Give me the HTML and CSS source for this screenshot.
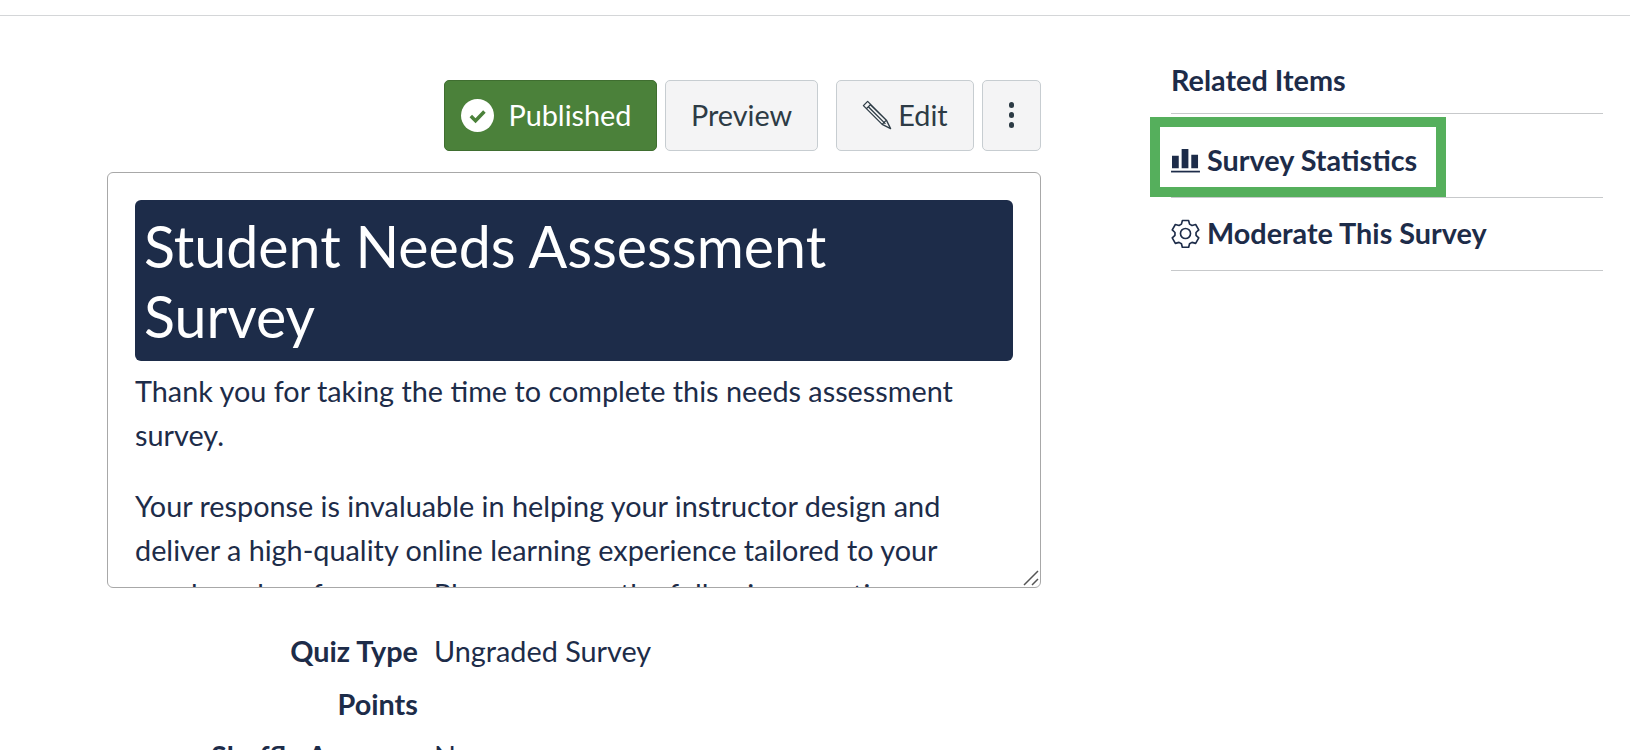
FILE: index.html
```html
<!DOCTYPE html>
<html lang="en">
<head>
<meta charset="utf-8">
<title>Student Needs Assessment Survey</title>
<link rel="stylesheet" href="styles.css">
</head>
<body>
<div class="topbar"></div>
<div class="page">
  <main class="content">
    <div class="toolbar">
      <button class="btn btn-published">
        <svg class="check" viewBox="0 0 32 32" width="33" height="33"><circle cx="16" cy="16" r="16" fill="#fff"/><path d="M9.500 16.500l4.600 4.600 8.600-9" fill="none" stroke="#4b813a" stroke-width="3.400"/></svg>
        <span>Published</span>
      </button>
      <button class="btn btn-preview">Preview</button>
      <button class="btn btn-edit">
        <svg class="pencil" viewBox="0 0 32 32" width="30" height="30"><path d="M1.500 6L6 1.500 26 21.500 30.500 30.500 21.500 26zM4.500 9.500l5-5M21.500 26l4.500-4.500M7 7.500l18 18M9.500 5.500l16.500 16" fill="none" stroke="#2d3b45" stroke-width="1.400" stroke-linejoin="round"/></svg>
        <span>Edit</span>
      </button>
      <button class="btn btn-more" aria-label="More">
        <span class="dot"></span><span class="dot"></span><span class="dot"></span>
      </button>
    </div>
    <section class="description">
      <h1 class="title">Student Needs Assessment Survey</h1>
      <p class="para">Thank you for taking the time to complete this needs assessment survey.</p>
      <p class="para">Your response is invaluable in helping your instructor design and deliver a high-quality online learning experience tailored to your needs and preferences. Please answer the following questions</p>
      <svg class="grip" viewBox="0 0 16 16" width="16" height="16"><path d="M1 15L15 1M9 15l6-6" stroke="#555" stroke-width="1.500" fill="none"/></svg>
    </section>
    <dl class="details">
      <dt>Quiz Type</dt><dd>Ungraded Survey</dd>
      <dt>Points</dt><dd></dd>
      <dt>Shuffle Answers</dt><dd>No</dd>
    </dl>
  </main>
  <aside class="sidebar">
    <h2 class="side-title">Related Items</h2>
    <ul class="side-list">
      <li class="side-item side-stats">
        <a class="side-link">
          <svg viewBox="0 0 30 28" width="29" height="27"><path d="M1 9h7v13H1zM11 2h7v20h-7zM21 8h7v14h-7z" fill="#1d2c49"/><path d="M0 25.500h30" stroke="#1d2c49" stroke-width="1.800"/></svg>
          <span>Survey Statistics</span>
        </a>
        <div class="highlight"></div>
      </li>
      <li class="side-item side-moderate">
        <a class="side-link">
          <svg viewBox="0 0 30 30" width="29" height="29"><g fill="none" stroke="#1d2c49" stroke-width="1.700" stroke-linejoin="round"><circle cx="15" cy="15" r="5.200"/><path d="M11.800 1.500h6.400l1 3.800 2.500 1.400 3.800-1 3.200 5.600-2.800 2.700v2.900l2.800 2.700-3.200 5.600-3.800-1-2.500 1.400-1 3.800h-6.400l-1-3.800-2.500-1.400-3.800 1-3.200-5.600 2.800-2.700v-2.900l-2.800-2.700 3.200-5.600 3.800 1 2.500-1.400z"/></g></svg>
          <span>Moderate This Survey</span>
        </a>
      </li>
    </ul>
  </aside>
</div>
</body>
</html>
```
FILE: styles.css
```css
* { box-sizing: border-box; }
html, body { margin: 0; padding: 0; height: 750px; overflow: hidden; background: #fff; }
body { font-family: Lato, "Noto Sans", sans-serif; color: #1d2c49; }

.topbar { height: 16px; border-bottom: 1px solid #d4d6d8; }

.page { display: flex; align-items: flex-start; padding-left: 107px; }
.content { width: 934px; padding-top: 64px; flex: none; }

.toolbar { display: flex; justify-content: flex-end; height: 71px; margin-bottom: 21px; }
.btn {
  display: flex; align-items: center; justify-content: center;
  height: 71px; padding: 0 0 1px; margin: 0;
  font: 400 28.800px Lato, sans-serif;
  color: #2d3b45; background: #f4f4f5;
  border: 1.500px solid #c7cdd1; border-radius: 5px;
}
.btn-published { width: 213px; gap: 15px; padding-right: 9px; margin-right: 8px; background: #4b813a; border-color: #3f6e30; color: #fff; }
.btn-preview { width: 153px; margin-right: 18px; }
.btn-edit { width: 138px; gap: 6px; margin-right: 8px; }
.btn-more { width: 59px; flex-direction: column; gap: 4.500px; }
.dot { width: 5.500px; height: 5.500px; border-radius: 50%; background: #2d3b45; }

.description {
  position: relative; height: 416px; overflow: hidden;
  padding: 27px 27px 0;
  border: 1px solid #a8a8a8; border-radius: 6px;
  font-size: 28.800px; line-height: 43.700px;
}
.title {
  margin: 0 0 9px; padding: 10.500px 9px;
  font-size: 57.300px; font-weight: 400; line-height: 70px;
  color: #fff; background: #1d2c49; border-radius: 6px;
}
.para { margin: 0 0 28px; }
.grip { position: absolute; right: 1px; bottom: 1px; }

.details {
  display: grid; grid-template-columns: 311px 1fr; column-gap: 16px;
  margin: 0; padding-top: 37px;
  font-size: 28.800px; line-height: 52.500px;
}
.details dt { font-weight: 700; text-align: right; }
.details dd { margin: 0; min-height: 52.500px; }

.sidebar { width: 432px; margin-left: 130px; padding-top: 48px; }
.side-title { margin: 0; height: 50px; padding-bottom: 1px; font-size: 28.800px; font-weight: 700; line-height: 33px; border-bottom: 1px solid #c7c9cb; }
.side-list { list-style: none; margin: 0; padding: 0; }
.side-item { position: relative; height: 73px; border-bottom: 1px solid #c7c9cb; }
.side-stats { height: 84px; padding-top: 9px; }
.side-moderate { padding-bottom: 2px; }
.side-link { display: flex; align-items: center; gap: 7px; height: 100%; font-size: 28.800px; font-weight: 700; }
.highlight { position: absolute; left: -21px; top: 3px; width: 296px; height: 80px; border: 10px solid #55af5c; }
```
